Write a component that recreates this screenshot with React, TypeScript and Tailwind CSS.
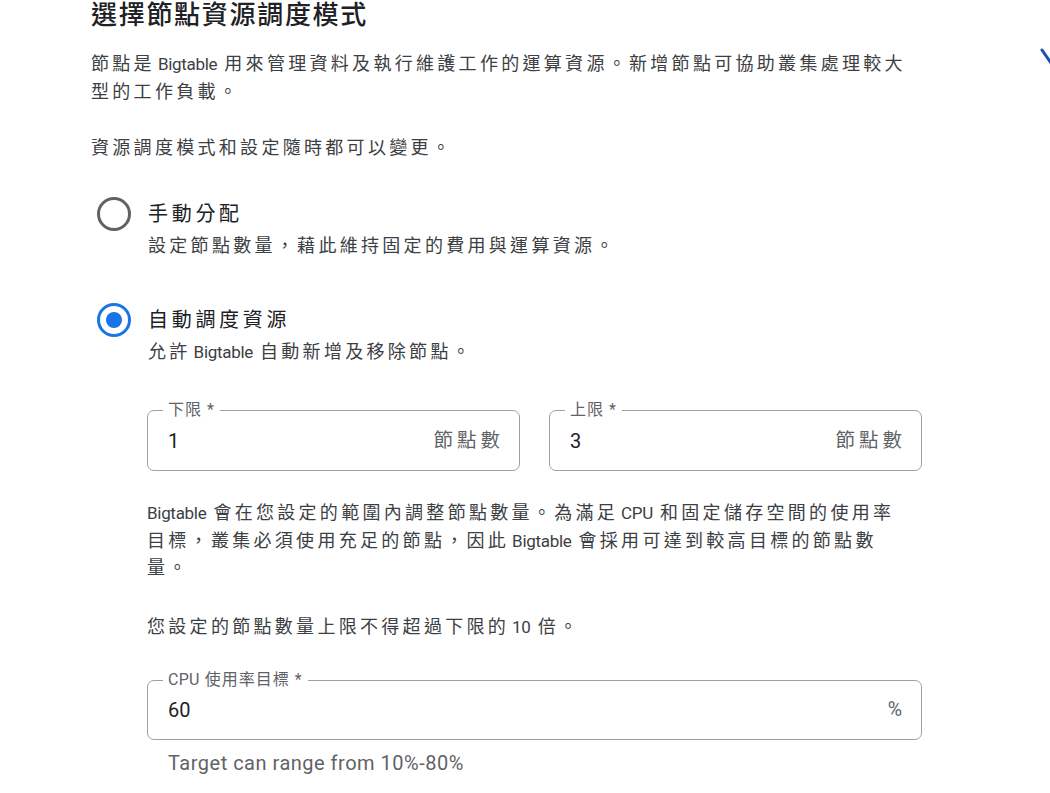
import React from "react"

const font = "font-['Roboto','Noto_Sans_CJK_TC',sans-serif]"
const body = "text-[18px] leading-[28px] tracking-[3.3px] text-[#3c4043]"

// latin words inside chinese text sit a bit tighter than the cjk run
function En({ children, first }: { children: React.ReactNode; first?: boolean }) {
  return (
    <span
      className={`${first ? "" : "pl-[3px]"} pr-[7px] text-[17px] leading-[20px] tracking-[-0.3px]`}
    >
      {children}
    </span>
  )
}

function Radio({ checked }: { checked?: boolean }) {
  return (
    <div className="flex h-[30px] w-[34px] items-center justify-center">
      {checked ? (
        <div className="flex h-[34px] w-[34px] shrink-0 items-center justify-center rounded-full border-[3px] border-[#1a73e8]">
          <div className="h-[16px] w-[16px] rounded-full bg-[#1a73e8]" />
        </div>
      ) : (
        <div className="h-[34px] w-[34px] shrink-0 rounded-full border-[3px] border-[#5f6368]" />
      )}
    </div>
  )
}

function RadioOption({
  checked,
  label,
  children,
}: {
  checked?: boolean
  label: string
  children: React.ReactNode
}) {
  return (
    <div className="flex items-start gap-[17px] pl-[6px]">
      <Radio checked={checked} />
      <div className="flex flex-col">
        <div className="text-[20px] leading-[30px] tracking-[3.7px] text-[#202124]">
          {label}
        </div>
        <div className={`mt-[3px] ${body}`}>{children}</div>
      </div>
    </div>
  )
}

function OutlinedField({
  label,
  value,
  suffix,
  className = "",
}: {
  label: React.ReactNode
  value: string
  suffix: string
  className?: string
}) {
  return (
    <div
      className={`relative flex items-center justify-between rounded-[7px] border-[1.5px] border-[#9aa0a6] pl-[20px] pr-[15px] ${className}`}
    >
      <span className="absolute -top-[12px] left-[15px] bg-white px-[5px] text-[16px] leading-[22px] tracking-[1px] text-[#5f6368]">
        {label}
      </span>
      <span className="text-[20px] text-[#202124]">{value}</span>
      <span className="text-[19.5px] tracking-[4px] text-[#5f6368]">{suffix}</span>
    </div>
  )
}

export default function App() {
  return (
    <div
      lang="zh-Hant"
      className={`${font} relative h-[793px] w-[1050px] overflow-hidden bg-white pl-[91px]`}
    >
      <h2 className="-mt-px text-[26px] leading-[32px] font-medium tracking-[1.7px] text-[#202124]">
        選擇節點資源調度模式
      </h2>

      <p className={`mt-[19px] ${body}`}>
        節點是<En>Bigtable</En>用來管理資料及執行維護工作的運算資源。新增節點可協助叢集處理較大
        <br />
        型的工作負載。
      </p>
      <p className={`mt-[28px] ${body}`}>資源調度模式和設定隨時都可以變更。</p>

      <div className="mt-[37px] flex flex-col gap-[45px]">
        <RadioOption label="手動分配">
          設定節點數量，藉此維持固定的費用與運算資源。
        </RadioOption>
        <RadioOption checked label="自動調度資源">
          允許<En>Bigtable</En>自動新增及移除節點。
        </RadioOption>
      </div>

      <div className="ml-[56px] w-[775px]">
        <div className="mt-[44px] flex gap-[29px]">
          <OutlinedField className="h-[61px] flex-1" label="下限 *" value="1" suffix="節點數" />
          <OutlinedField className="h-[61px] flex-1" label="上限 *" value="3" suffix="節點數" />
        </div>

        <p className="mt-[28px] text-[18px] leading-[27.5px] tracking-[3.3px] text-[#3c4043]">
          <En first>Bigtable</En>會在您設定的範圍內調整節點數量。為滿足<En>CPU</En>和固定儲存空間的使用率
          <br />
          目標，叢集必須使用充足的節點，因此<En>Bigtable</En>會採用可達到較高目標的節點數
          <br />
          量。
        </p>
        <p className={`mt-[31px] ${body}`}>
          您設定的節點數量上限不得超過下限的<En>10</En>倍。
        </p>

        <OutlinedField
          className="mt-[39px] h-[60px]"
          label={
            <>
              <span className="tracking-[0.3px]">CPU</span> 使用率目標 *
            </>
          }
          value="60"
          suffix="%"
        />
        <div className="mt-[11px] pl-[21px] text-[20px] leading-[24px] tracking-[0.5px] text-[#5f6368]">
          Target can range from 10%-80%
        </div>
      </div>

      <svg
        className="absolute left-[1036px] top-[44px]"
        width="14"
        height="26"
        viewBox="0 0 14 26"
        fill="none"
      >
        <path d="M6 6 L17 22" stroke="#1b4fb8" strokeWidth="3" strokeLinecap="round" />
      </svg>
    </div>
  )
}
